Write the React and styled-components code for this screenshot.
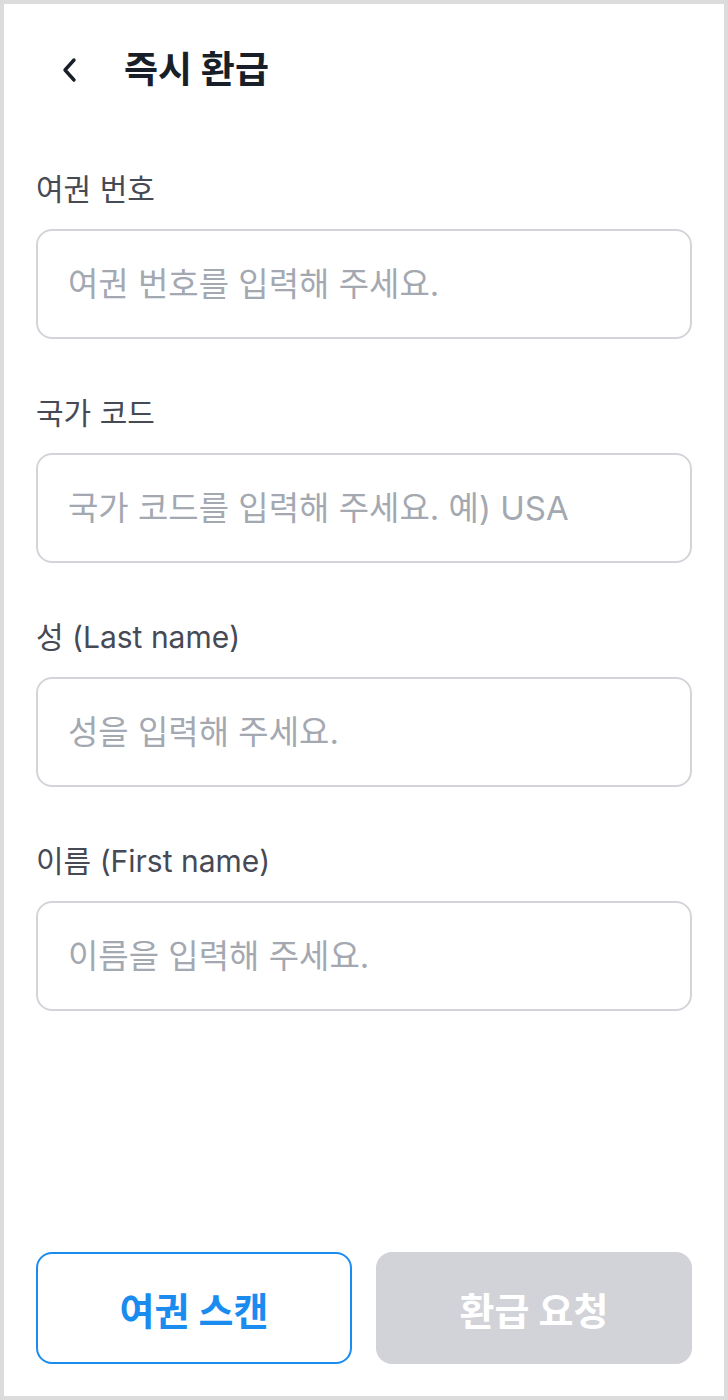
import React from "react";
import styled, { createGlobalStyle } from "styled-components";

const Global = createGlobalStyle`
  html, body { margin: 0; padding: 0; background: #dcdcdc; }
  * { box-sizing: border-box; }
  body { font-family: Inter, "Noto Sans CJK KR", sans-serif; }
`;

const Frame = styled.div`
  width: 728px;
  height: 1400px;
  border: 4px solid #dcdcdc;
  background: #ffffff;
  display: flex;
  flex-direction: column;
`;

const Header = styled.header`
  height: 132px;
  display: flex;
  align-items: center;
  padding-left: 52px;
  gap: 40px;
`;

const BackButton = styled.button`
  border: none;
  background: none;
  padding: 0;
  width: 28px;
  height: 32px;
  display: flex;
  align-items: center;
  justify-content: center;
  color: #191f28;
  cursor: pointer;
`;

const Title = styled.h1`
  margin: 0;
  font-size: 37px;
  line-height: 44px;
  font-weight: 700;
  color: #191f28;
`;

const Form = styled.main`
  flex: 1;
  padding: 35px 32px 0;
  display: flex;
  flex-direction: column;
  gap: 56px;
`;

const Field = styled.label`
  display: flex;
  flex-direction: column;
  gap: 22px;
`;

const LabelText = styled.span`
  font-size: 30px;
  line-height: 36px;
  color: #464a55;
`;

const Input = styled.input`
  height: 110px;
  border: 2px solid #d3d5da;
  border-radius: 16px;
  padding: 0 30px;
  font-family: inherit;
  font-size: 33px;
  color: #191f28;
  outline: none;
  background: #fff;
  &::placeholder { color: #a3a8b1; }
`;

const Footer = styled.footer`
  display: grid;
  grid-template-columns: 1fr 1fr;
  gap: 24px;
  padding: 0 32px 32px;
`;

const Button = styled.button`
  height: 112px;
  border-radius: 16px;
  font-family: inherit;
  font-size: 38px;
  font-weight: 700;
  border: 2px solid ${(p) => (p.$variant === "outline" ? "#1a8cf0" : "#d1d3d8")};
  background: ${(p) => (p.$variant === "outline" ? "#ffffff" : "#d1d3d8")};
  color: ${(p) => (p.$variant === "outline" ? "#1a8cf0" : "#ffffff")};
`;

const fields = [
  { label: "여권 번호", placeholder: "여권 번호를 입력해 주세요." },
  { label: "국가 코드", placeholder: "국가 코드를 입력해 주세요. 예) USA" },
  { label: "성 (Last name)", placeholder: "성을 입력해 주세요." },
  { label: "이름 (First name)", placeholder: "이름을 입력해 주세요." },
];

export default function App() {
  return (
    <>
      <Global />
      <Frame>
        <Header>
          <BackButton aria-label="뒤로">
            <svg width="22" height="28" viewBox="0 0 22 28" fill="none">
              <path d="M15 4 L6 14 L15 24" stroke="currentColor" strokeWidth="3.4" strokeLinecap="round" strokeLinejoin="round" />
            </svg>
          </BackButton>
          <Title>즉시 환급</Title>
        </Header>
        <Form>
          {fields.map((f) => (
            <Field key={f.label}>
              <LabelText>{f.label}</LabelText>
              <Input placeholder={f.placeholder} />
            </Field>
          ))}
        </Form>
        <Footer>
          <Button $variant="outline">여권 스캔</Button>
          <Button disabled>환급 요청</Button>
        </Footer>
      </Frame>
    </>
  );
}
